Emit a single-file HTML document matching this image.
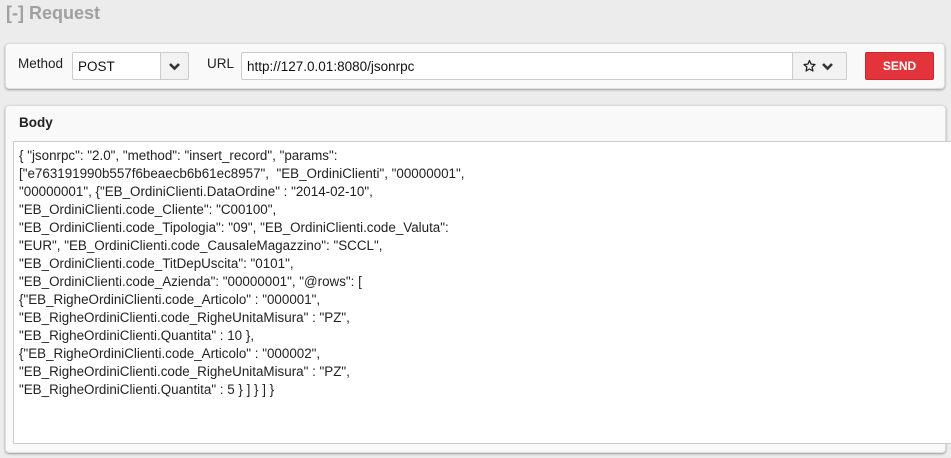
<!DOCTYPE html>
<html><head><meta charset="utf-8"><style>
*{box-sizing:border-box;margin:0;padding:0}
body{width:951px;height:458px;background:#ececec;font-family:"Liberation Sans",Arial,sans-serif;position:relative;overflow:hidden;color:#222}
.title{position:absolute;left:6px;top:3px;font-size:18px;font-weight:bold;color:#a0a0a0}
.p1{position:absolute;left:5px;top:43px;width:940px;height:46px;background:#f9f9f9;border:1px solid #ddd;border-radius:4px;box-shadow:0 1px 2px rgba(0,0,0,.35)}
.lbl{position:absolute;font-size:13.5px;top:56px;color:#222}
.box{position:absolute;top:52px;height:28px;background:#fff;border:1px solid #ccc;border-radius:2px;font-size:13.5px;padding:6px 5px;color:#111}
.seg{position:absolute;top:52px;height:28px;background:#f2f2f2;border:1px solid #ccc;border-radius:0 2px 2px 0}
.send{position:absolute;left:865px;top:52px;width:69px;height:28px;background:#e3343c;border:1px solid #c9262e;border-radius:2px;color:#fff;font-weight:bold;font-size:12px;text-align:center;line-height:27px}
.p2{position:absolute;left:5px;top:105px;width:941px;height:348px;background:#f9f9f9;border:1px solid #ddd;border-radius:4px;box-shadow:0 1px 2px rgba(0,0,0,.35)}
.body{position:absolute;left:19px;top:115px;font-size:13.5px;font-weight:bold}
.ta{position:absolute;left:13px;top:141px;width:945px;height:303px;background:#fff;border:1px solid #ccc;padding:5px 5px;font-size:13.4px;line-height:18px;color:#222;white-space:pre}
</style></head><body>
<div class="title">[-] Request</div>
<div class="p1"></div>
<div class="lbl" style="left:18px">Method</div>
<div class="box" style="left:72px;width:117px">POST</div>
<div class="seg" style="left:160px;width:29px"><svg width="27" height="26" viewBox="0 0 27 26"><path d="M9 11l4.5 4.5L18 11" stroke="#333" stroke-width="2.6" fill="none"/></svg></div>
<div class="lbl" style="left:207px">URL</div>
<div class="box" style="left:241px;width:606px">http://127.0.01:8080/jsonrpc</div>
<div class="seg" style="left:792px;width:55px"><svg width="53" height="26" viewBox="0 0 53 26"><path d="M16.5 7.5l1.6 3.6 3.9.4-2.9 2.6.8 3.9-3.4-2-3.4 2 .8-3.9-2.9-2.6 3.9-.4z" stroke="#222" stroke-width="1.3" fill="none" stroke-linejoin="round"/><path d="M30 11l4.5 4.5L39 11" stroke="#333" stroke-width="2.6" fill="none"/></svg></div>
<div class="send">SEND</div>
<div class="p2"></div>
<div class="body">Body</div>
<div class="ta">{ "jsonrpc": "2.0", "method": "insert_record", "params":
["e763191990b557f6beaecb6b61ec8957",  "EB_OrdiniClienti", "00000001",
"00000001", {"EB_OrdiniClienti.DataOrdine" : "2014-02-10",
"EB_OrdiniClienti.code_Cliente": "C00100",
"EB_OrdiniClienti.code_Tipologia": "09", "EB_OrdiniClienti.code_Valuta":
"EUR", "EB_OrdiniClienti.code_CausaleMagazzino": "SCCL",
"EB_OrdiniClienti.code_TitDepUscita": "0101",
"EB_OrdiniClienti.code_Azienda": "00000001", "@rows": [
{"EB_RigheOrdiniClienti.code_Articolo" : "000001",
"EB_RigheOrdiniClienti.code_RigheUnitaMisura" : "PZ",
"EB_RigheOrdiniClienti.Quantita" : 10 },
{"EB_RigheOrdiniClienti.code_Articolo" : "000002",
"EB_RigheOrdiniClienti.code_RigheUnitaMisura" : "PZ",
"EB_RigheOrdiniClienti.Quantita" : 5 } ] } ] }</div>
</body></html>
